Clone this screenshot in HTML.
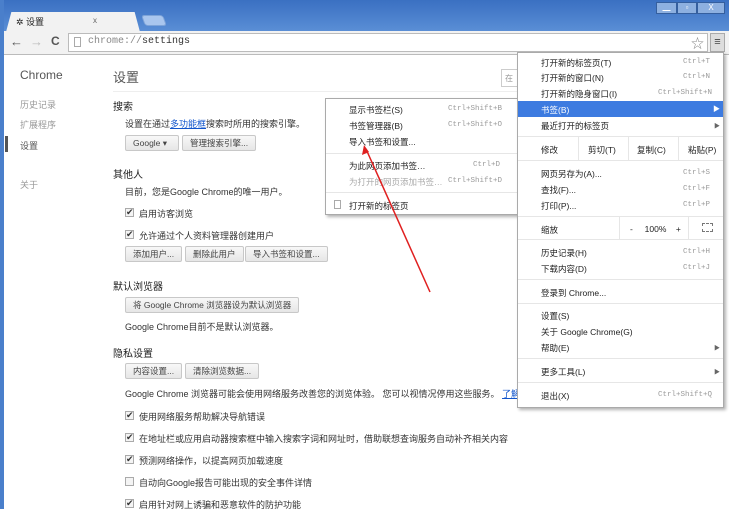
<!DOCTYPE html>
<html><head><meta charset="utf-8"><style>
*{margin:0;padding:0;box-sizing:border-box}
body{width:729px;height:509px;overflow:hidden;position:relative;background:#fff;font-family:"Liberation Sans","Noto Sans CJK SC",sans-serif;font-size:9px;color:#333}
.a{position:absolute;white-space:nowrap}
.btn{position:absolute;height:16px;border:1px solid #c8c8c8;border-radius:2px;background:linear-gradient(#f8f8f8,#e6e6e6);font-size:8.5px;color:#444;line-height:14px;padding:0 7px;white-space:nowrap}
.cb{position:absolute;width:9px;height:9px;border:1px solid #aaa;background:#f4f4f4;font-size:9px;line-height:7px;color:#333;text-align:center}
.h{position:absolute;font-size:10px;color:#222}
.m{position:absolute;font-size:8.5px;color:#222;white-space:nowrap}
.k{position:absolute;font-family:"Liberation Mono",monospace;font-size:7.5px;color:#999}
.sep{position:absolute;height:1px;background:#e6e6e6}
.wc{position:absolute;top:2px;height:12px;background:#8db0e0;border:1px solid #355f9e;font-size:8px;color:#fff;text-align:center;line-height:10px}
</style></head><body>
<!-- frame -->
<div class="a" style="left:0;top:0;width:729px;height:32px;background:linear-gradient(#3a70c2,#5b8fd6)"></div>
<div class="a" style="left:0;top:0;width:4px;height:509px;background:#4a7fcb"></div>
<div class="wc" style="left:656px;width:21px">▁</div>
<div class="wc" style="left:677px;width:20px">▫</div>
<div class="wc" style="left:697px;width:28px">X</div>
<!-- tab -->
<div class="a" style="left:6px;top:12px;width:134px;height:20px;background:#f2f2f2;border-radius:4px 4px 0 0;clip-path:polygon(4% 0,96% 0,100% 100%,0 100%)"></div>
<div class="a" style="left:16px;top:15px;font-size:9px;color:#222">✲ 设置</div>
<div class="a" style="left:93px;top:16px;font-size:8px;color:#666">x</div>
<div class="a" style="left:143px;top:15px;width:22px;height:11px;background:#a9c6ee;border:1px solid #7ea4d8;border-radius:3px;transform:skewX(20deg)"></div>
<!-- toolbar -->
<div class="a" style="left:4px;top:31px;width:725px;height:24px;background:#f2f2f2;border-bottom:1px solid #bbb"></div>
<div class="a" style="left:10px;top:34px;font-size:13px;color:#555">←</div>
<div class="a" style="left:30px;top:34px;font-size:13px;color:#bbb">→</div>
<div class="a" style="left:51px;top:34px;font-size:12px;font-weight:bold;color:#555">C</div>
<div class="a" style="left:68px;top:33px;width:640px;height:19px;background:#fff;border:1px solid #bbb"></div>
<div class="a" style="left:74px;top:37px;width:7px;height:10px;border:1px solid #aaa"></div>
<div class="a" style="left:88px;top:36px;font-family:'Liberation Mono',monospace;font-size:10px;color:#888">chrome://<span style="color:#333">settings</span></div>
<div class="a" style="left:691px;top:33px;font-size:13px;color:#888">☆</div>
<div class="a" style="left:710px;top:33px;width:15px;height:19px;background:#ddd;border:1px solid #aaa;font-size:11px;text-align:center;line-height:16px;color:#444">≡</div>
<!-- sidebar -->
<div class="a" style="left:20px;top:68px;font-size:12px;color:#555">Chrome</div>
<div class="a" style="left:20px;top:98px;color:#999">历史记录</div>
<div class="a" style="left:20px;top:118px;color:#999">扩展程序</div>
<div class="a" style="left:20px;top:139px;color:#555">设置</div>
<div class="a" style="left:5px;top:136px;width:3px;height:16px;background:#555"></div>
<div class="a" style="left:20px;top:178px;color:#999">关于</div>
<!-- content -->
<div class="a" style="left:113px;top:67px;font-size:13px;color:#555">设置</div>
<div class="a" style="left:113px;top:91px;width:410px;height:1px;background:#eee"></div>
<div class="a" style="left:501px;top:69px;width:20px;height:18px;border:1px solid #ccc;font-size:8px;color:#999;padding:3px">在</div>
<div class="h" style="left:113px;top:98px">搜索</div>
<div class="a" style="left:125px;top:117px">设置在通过<span style="color:#15c;text-decoration:underline">多功能框</span>搜索时所用的搜索引擎。</div>
<div class="btn" style="left:125px;top:135px;width:54px">Google ▾</div>
<div class="btn" style="left:182px;top:135px">管理搜索引擎...</div>
<div class="h" style="left:113px;top:166px">其他人</div>
<div class="a" style="left:125px;top:185px">目前，您是Google Chrome的唯一用户。</div>
<div class="cb" style="left:125px;top:208px">✔</div><div class="a" style="left:139px;top:207px">启用访客浏览</div>
<div class="cb" style="left:125px;top:230px">✔</div><div class="a" style="left:139px;top:229px">允许通过个人资料管理器创建用户</div>
<div class="btn" style="left:125px;top:246px">添加用户...</div>
<div class="btn" style="left:185px;top:246px">删除此用户</div>
<div class="btn" style="left:245px;top:246px">导入书签和设置...</div>
<div class="h" style="left:113px;top:278px">默认浏览器</div>
<div class="btn" style="left:125px;top:297px">将 Google Chrome 浏览器设为默认浏览器</div>
<div class="a" style="left:125px;top:320px">Google Chrome目前不是默认浏览器。</div>
<div class="h" style="left:113px;top:345px">隐私设置</div>
<div class="btn" style="left:125px;top:363px">内容设置...</div>
<div class="btn" style="left:185px;top:363px">清除浏览数据...</div>
<div class="a" style="left:125px;top:387px">Google Chrome 浏览器可能会使用网络服务改善您的浏览体验。 您可以视情况停用这些服务。 <span style="color:#15c;text-decoration:underline">了解详情</span></div>
<div class="cb" style="left:125px;top:411px">✔</div><div class="a" style="left:139px;top:410px">使用网络服务帮助解决导航错误</div>
<div class="cb" style="left:125px;top:433px">✔</div><div class="a" style="left:139px;top:432px">在地址栏或应用启动器搜索框中输入搜索字词和网址时，借助联想查询服务自动补齐相关内容</div>
<div class="cb" style="left:125px;top:455px">✔</div><div class="a" style="left:139px;top:454px">预测网络操作，以提高网页加载速度</div>
<div class="cb" style="left:125px;top:477px"></div><div class="a" style="left:139px;top:476px">自动向Google报告可能出现的安全事件详情</div>
<div class="cb" style="left:125px;top:499px">✔</div><div class="a" style="left:139px;top:498px">启用针对网上诱骗和恶意软件的防护功能</div>
<!-- submenu -->
<div class="a" style="left:325px;top:98px;width:194px;height:117px;background:#fff;border:1px solid #aaa;box-shadow:2px 2px 3px rgba(0,0,0,.3)"></div>
<div class="m" style="left:349px;top:104px">显示书签栏(S)</div><div class="k" style="left:448px;top:105px">Ctrl+Shift+B</div>
<div class="m" style="left:349px;top:120px">书签管理器(B)</div><div class="k" style="left:448px;top:121px">Ctrl+Shift+O</div>
<div class="m" style="left:349px;top:136px">导入书签和设置...</div>
<div class="sep" style="left:326px;top:153px;width:192px"></div>
<div class="m" style="left:349px;top:160px">为此网页添加书签…</div><div class="k" style="left:473px;top:161px">Ctrl+D</div>
<div class="m" style="left:349px;top:176px;color:#aaa">为打开的网页添加书签…</div><div class="k" style="left:448px;top:177px">Ctrl+Shift+D</div>
<div class="sep" style="left:326px;top:192px;width:192px"></div>
<div class="a" style="left:334px;top:200px;width:7px;height:9px;border:1px solid #aaa"></div>
<div class="m" style="left:349px;top:200px">打开新的标签页</div>
<!-- main menu -->
<div class="a" style="left:517px;top:52px;width:207px;height:356px;background:#fff;border:1px solid #aaa;box-shadow:2px 2px 3px rgba(0,0,0,.3)"></div>
<div class="m" style="left:541px;top:57px">打开新的标签页(T)</div><div class="k" style="left:683px;top:58px">Ctrl+T</div>
<div class="m" style="left:541px;top:72px">打开新的窗口(N)</div><div class="k" style="left:683px;top:73px">Ctrl+N</div>
<div class="m" style="left:541px;top:88px">打开新的隐身窗口(I)</div><div class="k" style="left:658px;top:89px">Ctrl+Shift+N</div>
<div class="a" style="left:518px;top:101px;width:205px;height:16px;background:#3d7be0"></div>
<div class="m" style="left:541px;top:104px;color:#fff">书签(B)</div><div class="a" style="left:713px;top:104px;font-size:7px;color:#fff">▶</div>
<div class="m" style="left:541px;top:120px">最近打开的标签页</div><div class="a" style="left:714px;top:121px;font-size:6px;color:#666">▶</div>
<div class="sep" style="left:518px;top:136px;width:205px"></div>
<div class="a" style="left:578px;top:137px;width:1px;height:23px;background:#e6e6e6"></div>
<div class="a" style="left:628px;top:137px;width:1px;height:23px;background:#e6e6e6"></div>
<div class="a" style="left:678px;top:137px;width:1px;height:23px;background:#e6e6e6"></div>
<div class="m" style="left:541px;top:144px">修改</div><div class="m" style="left:588px;top:144px">剪切(T)</div><div class="m" style="left:637px;top:144px">复制(C)</div><div class="m" style="left:688px;top:144px">粘贴(P)</div>
<div class="sep" style="left:518px;top:160px;width:205px"></div>
<div class="m" style="left:541px;top:168px">网页另存为(A)...</div><div class="k" style="left:683px;top:169px">Ctrl+S</div>
<div class="m" style="left:541px;top:184px">查找(F)...</div><div class="k" style="left:683px;top:185px">Ctrl+F</div>
<div class="m" style="left:541px;top:200px">打印(P)...</div><div class="k" style="left:683px;top:201px">Ctrl+P</div>
<div class="sep" style="left:518px;top:216px;width:205px"></div>
<div class="a" style="left:619px;top:217px;width:1px;height:22px;background:#e6e6e6"></div>
<div class="a" style="left:688px;top:217px;width:1px;height:22px;background:#e6e6e6"></div>
<div class="m" style="left:541px;top:224px">缩放</div><div class="m" style="left:630px;top:224px">-&nbsp;&nbsp;&nbsp;&nbsp; 100% &nbsp;&nbsp;&nbsp;+</div><div class="a" style="left:702px;top:223px;width:11px;height:9px;border:1px dashed #777"></div>
<div class="sep" style="left:518px;top:239px;width:205px"></div>
<div class="m" style="left:541px;top:247px">历史记录(H)</div><div class="k" style="left:683px;top:248px">Ctrl+H</div>
<div class="m" style="left:541px;top:263px">下载内容(D)</div><div class="k" style="left:683px;top:264px">Ctrl+J</div>
<div class="sep" style="left:518px;top:279px;width:205px"></div>
<div class="m" style="left:541px;top:287px">登录到 Chrome...</div>
<div class="sep" style="left:518px;top:303px;width:205px"></div>
<div class="m" style="left:541px;top:310px">设置(S)</div>
<div class="m" style="left:541px;top:326px">关于 Google Chrome(G)</div>
<div class="m" style="left:541px;top:342px">帮助(E)</div><div class="a" style="left:714px;top:343px;font-size:6px;color:#666">▶</div>
<div class="sep" style="left:518px;top:358px;width:205px"></div>
<div class="m" style="left:541px;top:366px">更多工具(L)</div><div class="a" style="left:714px;top:367px;font-size:6px;color:#666">▶</div>
<div class="sep" style="left:518px;top:382px;width:205px"></div>
<div class="m" style="left:541px;top:390px">退出(X)</div><div class="k" style="left:658px;top:391px">Ctrl+Shift+Q</div>
<!-- arrow -->
<svg class="a" style="left:0;top:0" width="729" height="509"><line x1="430" y1="292" x2="366" y2="149" stroke="#e02020" stroke-width="1.5"/><path d="M364 145 L362 155 L369 152 Z" fill="#e02020"/></svg>
</body></html>
